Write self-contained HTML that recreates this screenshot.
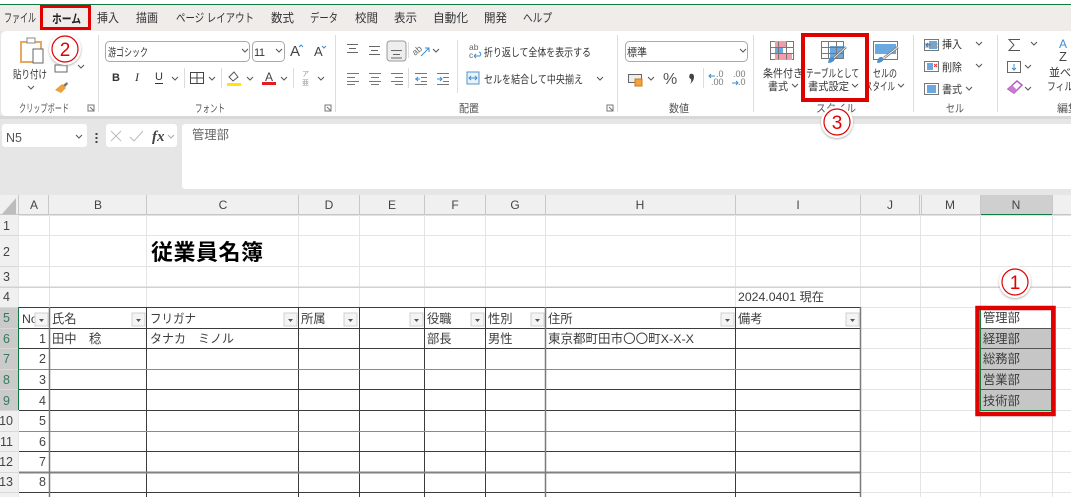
<!DOCTYPE html>
<html lang="ja"><head><meta charset="utf-8"><title>Excel</title>
<style>
html,body{margin:0;padding:0;background:#fff;width:1071px;height:503px;overflow:hidden}
svg{display:block;filter:blur(.3px)}
text{font-family:"Liberation Sans","Noto Sans CJK JP",sans-serif;fill:#444}
.t{font-size:12px;fill:#333}
.r{font-size:11px;fill:#333}
.g{font-size:11px;fill:#555}
.c{font-size:12.300px;fill:#3c3c3c}
.h{font-size:12px;fill:#444;text-anchor:middle}
.n{font-size:12.500px;fill:#444;text-anchor:end}
.s{fill:#35795a}
.ln{stroke:#3c3c3c;stroke-width:1;fill:none}
.lg{stroke:#e4e4e4;stroke-width:1;fill:none}
.ch{fill:none;stroke:#555;stroke-width:1}
.ic{fill:none;stroke:#666;stroke-width:1}
.blue{fill:#6aa9e0}
</style></head><body>
<svg width="1071" height="503" viewBox="0 0 1071 503" xmlns="http://www.w3.org/2000/svg">
<defs>
<path id="cv" d="M0 0l3 3 3-3"/>
<g id="fb"><rect width="13" height="13" fill="#f4f4f4" stroke="#d0d0d0"/><path d="M4 6h5l-2.500 3z" fill="#555"/></g>
<filter id="sh" x="-30%" y="-30%" width="160%" height="160%"><feDropShadow dx="0" dy="1" stdDeviation="1" flood-color="#888" flood-opacity=".7"/></filter>
</defs>

<!-- Top chrome -->
<rect width="1071" height="503" fill="#fff"/>
<rect y="4" width="1071" height="1" fill="#107c41"/>
<rect y="5" width="1071" height="27" fill="#efecea"/>
<rect y="31" width="1071" height="164" fill="#e6e6e6"/>
<rect x="0" y="116" width="1071" height="3" fill="#d8d8d8"/>
<rect x="1" y="31" width="1075" height="85" rx="5" fill="#fff"/>

<!-- Tabs -->
<g class="tabs">
<text class="t" x="4" y="22" textLength="32" lengthAdjust="spacingAndGlyphs">ファイル</text>
<text class="t" x="52" y="23" textLength="29" lengthAdjust="spacingAndGlyphs" font-weight="700" style="fill:#222">ホーム</text>
<text class="t" x="97" y="22" textLength="22" lengthAdjust="spacingAndGlyphs">挿入</text>
<text class="t" x="136" y="22" textLength="22" lengthAdjust="spacingAndGlyphs">描画</text>
<text class="t" x="176" y="22" textLength="78" lengthAdjust="spacingAndGlyphs">ページ レイアウト</text>
<text class="t" x="271" y="22" textLength="23" lengthAdjust="spacingAndGlyphs">数式</text>
<text class="t" x="310" y="22" textLength="28" lengthAdjust="spacingAndGlyphs">データ</text>
<text class="t" x="355" y="22" textLength="23" lengthAdjust="spacingAndGlyphs">校閲</text>
<text class="t" x="394" y="22" textLength="23" lengthAdjust="spacingAndGlyphs">表示</text>
<text class="t" x="433" y="22" textLength="35" lengthAdjust="spacingAndGlyphs">自動化</text>
<text class="t" x="484" y="22" textLength="23" lengthAdjust="spacingAndGlyphs">開発</text>
<text class="t" x="523" y="22" textLength="29" lengthAdjust="spacingAndGlyphs">ヘルプ</text>
</g>

<!-- Ribbon separators -->
<g stroke="#dcdcdc" stroke-width="1">
<path d="M98.500 35V112M335.500 35V112M617.500 35V112M753.500 35V112M913.500 35V112M997.500 35V112"/>
<path d="M457.500 40V93M408.500 42V58M408.500 68V88M184.500 68V88M221.500 68V88M293.500 68V88M703.500 68V88"/>
</g>

<!-- Clipboard -->
<rect x="21" y="42" width="20" height="20" fill="#fff" stroke="#e9a860" stroke-width="2"/>
<rect x="27" y="38" width="8" height="5" fill="#fff" stroke="#888"/>
<rect x="33" y="49" width="10" height="14" fill="#fff" stroke="#666"/>
<text class="r" x="13" y="78" textLength="34" lengthAdjust="spacingAndGlyphs">貼り付け</text>
<use href="#cv" x="28" y="86" class="ch"/>
<rect x="55" y="65" width="12" height="7" class="ic"/>
<use href="#cv" x="78" y="65" class="ch"/>
<path d="M55 90l7-6 4 4-5 5z" fill="#eba13c"/><path d="M63 85l4-3 1 2-3 3z" fill="#777"/>
<text class="g" x="19" y="112" textLength="50" lengthAdjust="spacingAndGlyphs">クリップボード</text>
<path d="M88 105h6v6h-6zM90 107l4 4" fill="none" stroke="#777"/>

<!-- Font -->
<rect x="105.500" y="41.500" width="144" height="20" rx="4" fill="#fff" stroke="#aaa"/>
<text class="r" x="108" y="56" textLength="40" lengthAdjust="spacingAndGlyphs">游ゴシック</text>
<use href="#cv" x="242" y="49" class="ch"/>
<rect x="252.500" y="41.500" width="32" height="20" rx="4" fill="#fff" stroke="#aaa"/>
<text class="r" x="254" y="56" textLength="11">11</text>
<use href="#cv" x="276" y="49" class="ch"/>
<text x="290" y="56" style="font-size:15px;fill:#444">A</text><path d="M299 47l2-2 2 2" fill="none" stroke="#3b8fd6"/>
<text x="314" y="56" style="font-size:13px;fill:#444">A</text><path d="M322 46l2 2 2-2" fill="none" stroke="#3b8fd6"/>
<text x="112" y="81" style="font-size:11px;font-weight:700;fill:#333">B</text>
<text x="135" y="81" style="font-size:12px;font-style:italic;fill:#333;font-family:'Liberation Serif',serif">I</text>
<text x="155" y="80" style="font-size:11px;fill:#333">U</text><path d="M155 83.500h8" stroke="#333"/>
<use href="#cv" x="172" y="77" class="ch"/>
<path d="M190.500 72.500h13v11h-13zM197 72.500v11M190.500 78h13" fill="none" stroke="#444"/>
<use href="#cv" x="209" y="77" class="ch"/>
<path d="M229 77l5-5 4 5-5 4z" fill="none" stroke="#555"/><rect x="227" y="83" width="14" height="3" fill="#ffe800"/>
<use href="#cv" x="247" y="77" class="ch"/>
<text x="265" y="81" style="font-size:12px;fill:#444">A</text><rect x="262" y="82" width="14" height="3" fill="#e51c23"/>
<use href="#cv" x="281" y="77" class="ch"/>
<text x="302" y="76" style="font-size:7px;fill:#999">ア</text><text x="302" y="85" style="font-size:7px;fill:#999">亜</text>
<use href="#cv" x="318" y="77" class="ch"/>
<text class="g" x="195" y="112" textLength="30" lengthAdjust="spacingAndGlyphs">フォント</text>
<path d="M325 105h6v6h-6zM327 107l4 4" fill="none" stroke="#777"/>

<!-- Align -->
<path d="M347 44.500h11M349 48.500h7M347 52.500h11M369 46.500h11M371 50.500h7M369 54.500h11" stroke="#666" fill="none"/>
<rect x="387" y="41" width="19" height="20" rx="3" fill="#eee" stroke="#999"/>
<path d="M391 50.500h11M393 54.500h7M391 58h11" stroke="#666"/>
<text x="415" y="56" style="font-size:9px;fill:#666" transform="rotate(-40 415 56)">ab</text>
<path d="M421 56l8-8m-4 0h4v4" stroke="#3b8fd6" fill="none"/>
<use href="#cv" x="433" y="49" class="ch"/>
<path d="M347 73.500h12M347 77.500h8M347 81.500h12M347 84.500h8M369 73.500h12M371 77.500h8M369 81.500h12M371 84.500h8M391 73.500h12M395 77.500h8M391 81.500h12M395 84.500h8" stroke="#777" fill="none"/>
<path d="M415 73.500h12M421 77.500h6M421 81.500h6M415 84.500h12M437 73.500h12M443 77.500h6M443 81.500h6M437 84.500h12" stroke="#777" fill="none"/>
<path d="M415 79h5M418 77l-2 2 2 2" stroke="#3b8fd6" fill="none"/><path d="M437 79h5M440 77l2 2-2 2" stroke="#3b8fd6" fill="none"/>
<text x="469" y="50" style="font-size:8.500px;fill:#666">ab</text><text x="469" y="58" style="font-size:8.500px;fill:#666">c</text>
<path d="M474 56h6q2-3-1-4M474 56l2-2M474 56l2 2" stroke="#3b8fd6" fill="none"/>
<text class="r" x="484" y="56" textLength="107" lengthAdjust="spacingAndGlyphs">折り返して全体を表示する</text>
<rect x="467" y="72" width="12" height="12" fill="#e8f2fb" stroke="#5a93c4"/><path d="M469 78h8M471 76l-2 2 2 2M475 76l2 2-2 2" stroke="#3b8fd6" fill="none"/>
<text class="r" x="484" y="83" textLength="99" lengthAdjust="spacingAndGlyphs">セルを結合して中央揃え</text>
<use href="#cv" x="597" y="77" class="ch"/>
<text class="g" x="459" y="112" textLength="20" lengthAdjust="spacingAndGlyphs">配置</text>
<path d="M607 105h6v6h-6zM609 107l4 4" fill="none" stroke="#777"/>

<!-- Number -->
<rect x="625.500" y="41.500" width="122" height="20" rx="4" fill="#fff" stroke="#aaa"/>
<text class="r" x="627" y="56" textLength="20" lengthAdjust="spacingAndGlyphs">標準</text>
<use href="#cv" x="740" y="49" class="ch"/>
<rect x="628.500" y="74.500" width="13" height="8" fill="#eee" stroke="#666"/>
<rect x="635" y="79" width="7" height="7" fill="#f6a13c" stroke="#c87a20"/>
<use href="#cv" x="648" y="77" class="ch"/>
<text x="663" y="84" style="font-size:16px;fill:#555">%</text>
<path d="M690 74q4-1 4 3q0 4-4 7q2-3 1-5q-3-1-1-5z" fill="#444"/>
<text x="716" y="77" style="font-size:9px;fill:#777">.0</text><text x="711" y="85" style="font-size:9px;fill:#777">.00</text>
<path d="M709 76h6M711 74l-2 2 2 2" stroke="#3b8fd6" fill="none"/>
<text x="733" y="77" style="font-size:9px;fill:#777">.00</text><text x="738" y="85" style="font-size:9px;fill:#777">.0</text>
<path d="M732 83h6M736 81l2 2-2 2" stroke="#3b8fd6" fill="none"/>
<text class="g" x="669" y="112" textLength="20" lengthAdjust="spacingAndGlyphs">数値</text>

<!-- Styles -->
<rect x="770.500" y="41.500" width="23" height="18" fill="#fff" stroke="#777"/>
<rect x="775" y="41" width="12" height="6" fill="#f59aa6"/><rect x="775" y="47" width="8" height="7" fill="#6aa9e0"/><rect x="775" y="54" width="17" height="6" fill="#f59aa6"/>
<path d="M770.500 47.500h23M770.500 53.500h23M778.500 41.500v18M786.500 41.500v18" stroke="#777" fill="none"/>
<text class="r" x="763" y="77" textLength="40" lengthAdjust="spacingAndGlyphs">条件付き</text>
<text class="r" x="768" y="90" textLength="20" lengthAdjust="spacingAndGlyphs">書式</text>
<use href="#cv" x="792" y="84" class="ch"/>
<rect x="821.500" y="41.500" width="22" height="17" fill="#fff" stroke="#777"/>
<rect x="830" y="46" width="13" height="12" class="blue"/>
<path d="M821.500 47.500h22M821.500 53.500h22M828.500 41.500v17M836.500 41.500v17" stroke="#777" fill="none"/>
<path d="M834 58l12-11" stroke="#777" stroke-width="2.500"/><path d="M834 58l12-11" stroke="#fff" stroke-width=".8"/><path d="M828 63q1-7 5-6l2 2q-2 4-7 4z" fill="#4d8fca"/>
<text class="r" x="806" y="77" textLength="53" lengthAdjust="spacingAndGlyphs">テーブルとして</text>
<text class="r" x="808" y="90" textLength="41" lengthAdjust="spacingAndGlyphs">書式設定</text>
<use href="#cv" x="852" y="84" class="ch"/>
<rect x="873.500" y="41.500" width="24" height="18" fill="#fff" stroke="#777"/>
<rect x="875" y="44" width="21" height="10" class="blue"/>
<path d="M884 58l14-11" stroke="#777" stroke-width="2.500"/><path d="M884 58l14-11" stroke="#fff" stroke-width=".8"/><path d="M877 63q1-7 5-6l2 2q-2 4-7 4z" fill="#4d8fca"/>
<text class="r" x="873" y="77" textLength="24" lengthAdjust="spacingAndGlyphs">セルの</text>
<text class="r" x="865" y="90" textLength="30" lengthAdjust="spacingAndGlyphs">スタイル</text>
<use href="#cv" x="898" y="84" class="ch"/>
<text class="g" x="816" y="112" textLength="40" lengthAdjust="spacingAndGlyphs">スタイル</text>

<!-- Cells -->
<rect x="924.500" y="39.500" width="14" height="11" fill="#fff" stroke="#777"/><rect x="929" y="41" width="8" height="8" class="blue"/><path d="M925 44h13M925 47h13" stroke="#999" fill="none"/><path d="M926 45h5M928 43l-2 2 2 2" stroke="#2a7cc8" fill="none"/>
<text class="r" x="942" y="48" textLength="20" lengthAdjust="spacingAndGlyphs">挿入</text><use href="#cv" x="976" y="42" class="ch"/>
<rect x="924.500" y="61.500" width="14" height="10" fill="#fff" stroke="#777"/><rect x="927" y="63" width="6" height="7" class="blue"/><path d="M934 64l3 3m0-3l-3 3" stroke="#e33"/>
<text class="r" x="942" y="71" textLength="20" lengthAdjust="spacingAndGlyphs">削除</text><use href="#cv" x="976" y="64" class="ch"/>
<rect x="924.500" y="83.500" width="14" height="11" fill="#fff" stroke="#777"/><rect x="927" y="85" width="9" height="8" class="blue"/>
<text class="r" x="942" y="93" textLength="20" lengthAdjust="spacingAndGlyphs">書式</text><use href="#cv" x="966" y="87" class="ch"/>
<text class="g" x="946" y="112" textLength="18" lengthAdjust="spacingAndGlyphs">セル</text>

<!-- Edit -->
<path d="M1020 39.500h-11l5 5.500-5 5.500h11" fill="none" stroke="#555"/><use href="#cv" x="1031" y="42" class="ch"/>
<rect x="1007.500" y="61.500" width="13" height="11" fill="#fff" stroke="#666"/><path d="M1014 64v6m-2-2l2 2 2-2" stroke="#3b8fd6" fill="none"/>
<use href="#cv" x="1025" y="65" class="ch"/>
<path d="M1008 89l9-8 5 4-8 8z" fill="#fff" stroke="#b45cc0" stroke-width="1.500"/><path d="M1008 89l4-4 5 5-3 3z" fill="#c77dcf"/>
<use href="#cv" x="1025" y="87" class="ch"/>
<text x="1059" y="48" style="font-size:12px;fill:#3b8fd6">A</text>
<text x="1059" y="61" style="font-size:13px;fill:#444">Z</text>
<text class="r" x="1049" y="76" textLength="33" lengthAdjust="spacingAndGlyphs">並べ替</text>
<text class="r" x="1047" y="90" textLength="35" lengthAdjust="spacingAndGlyphs">フィルタ</text>
<text class="g" x="1057" y="112" textLength="22" lengthAdjust="spacingAndGlyphs">編集</text>

<!-- Formula bar -->
<rect x="2" y="124" width="85" height="23" rx="3" fill="#fff"/>
<text x="6" y="142" style="font-size:12.500px;fill:#555">N5</text>
<use href="#cv" x="76" y="135" class="ch"/>
<path d="M96.500 133v2M96.500 137v2M96.500 141v2" stroke="#444" stroke-width="2"/>
<rect x="106" y="124" width="71" height="23" rx="3" fill="#fff"/>
<path d="M111 131l10 10m0-10l-10 10M130 137l4 4 9-10" stroke="#bbb" fill="none"/>
<text x="152" y="141" style="font-size:15px;font-style:italic;font-weight:700;fill:#444;font-family:'Liberation Serif',serif">fx</text>
<use href="#cv" x="168" y="135" class="ch" style="stroke:#aaa"/>
<rect x="182" y="124" width="895" height="65" rx="3" fill="#fff"/>
<text x="192" y="139" style="font-size:12.300px;fill:#666">管理部</text>

<!-- Sheet -->
<rect y="195" width="1071" height="308" fill="#fff"/>
<rect y="195" width="1071" height="20" fill="#f0f0f0"/>
<rect x="980" y="195" width="72" height="20" fill="#cfcfcf"/>
<rect x="0" y="214" width="1071" height="1.500" fill="#c6c6c6"/>
<rect x="980" y="214" width="72" height="1" fill="#107c41"/>
<rect x="0" y="215" width="18" height="282" fill="#f0f0f0"/>
<rect x="0" y="307" width="18" height="103" fill="#cacaca"/>
<path d="M2 214L16 198V214z" fill="#bdbdbd"/>

<!-- Grid lines -->
<g class="lg">
<path d="M18.500 215V497M49.500 215V497M146.500 215V497M298.500 215V497M359.500 215V497M424.500 215V497M485.500 215V497M545.500 215V497M735.500 215V497M860.500 215V497M920.500 215V497M980.500 215V497M1052.500 215V497"/>
<path d="M0 235.500H1071M0 266.500H1071M0 307.500H1071M0 328.500H1071M0 348.500H1071M0 369.500H1071M0 389.500H1071M0 410.500H1071M0 431.500H1071M0 451.500H1071M0 472.500H1071M0 492.500H1071"/>
</g>
<rect x="0" y="286.500" width="1071" height="1.500" fill="#d2d2d2"/>
<path d="M48.500 195V215M146.500 195V215M298.500 195V215M359.500 195V215M424.500 195V215M485.500 195V215M545.500 195V215M735.500 195V215M860.500 195V215M919.500 195V215M921.500 195V215M980.500 195V215M1052.500 195V215M18.500 195V215" stroke="#c8c8c8" fill="none"/>
<path d="M0 235.500H18M0 266.500H18M0 307.500H18M0 328.500H18M0 348.500H18M0 369.500H18M0 389.500H18M0 410.500H18M0 431.500H18M0 451.500H18M0 472.500H18M0 492.500H18" stroke="#d8d8d8"/>
<rect x="18" y="307" width="1" height="103" fill="#107c41"/>

<!-- Column headings -->
<text class="h" x="34" y="209">A</text><text class="h" x="98" y="209">B</text><text class="h" x="223" y="209">C</text><text class="h" x="329" y="209">D</text><text class="h" x="392" y="209">E</text><text class="h" x="455" y="209">F</text><text class="h" x="515" y="209">G</text><text class="h" x="640" y="209">H</text><text class="h" x="798" y="209">I</text><text class="h" x="890" y="209">J</text><text class="h" x="950" y="209">M</text><text class="h" x="1016" y="209">N</text>

<!-- Row headings -->
<g>
<text class="n" x="10" y="230">1</text><text class="n" x="10" y="256">2</text><text class="n" x="10" y="281">3</text><text class="n" x="10" y="301">4</text><text class="n s" x="10" y="322">5</text><text class="n s" x="10" y="343">6</text><text class="n s" x="10" y="363">7</text><text class="n s" x="10" y="384">8</text><text class="n s" x="10" y="405">9</text><text class="n" x="13" y="425">10</text><text class="n" x="13" y="446">11</text><text class="n" x="13" y="466">12</text><text class="n" x="13" y="486">13</text>
</g>

<text x="151" y="260" style="font-size:22px;font-weight:700;fill:#000" textLength="112">従業員名簿</text>
<text class="c" x="738" y="301" style="font-size:12px" textLength="86" lengthAdjust="spacingAndGlyphs">2024.0401 現在</text>

<!-- Table -->
<g class="ln">
<path d="M19 307.500H860M19 328.500H860M19 348.500H860M19 389.500H860M19 410.500H860M19 451.500H860M19 492.500H860"/>
<path d="M146.500 307V497M298.500 307V497M359.500 307V497M424.500 307V497M485.500 307V497M735.500 307V497"/>
</g>
<path d="M19 369.500H860M19 431.500H860" stroke="#8a8a8a"/>
<rect x="19" y="471.500" width="841" height="2" fill="#808080"/>
<path d="M49.500 307V497M545.500 307V497M860.500 307V497" stroke="#7a7a7a" stroke-width="1.500"/>

<text class="c" x="22" y="323">No</text>
<use href="#fb" x="35" y="313"/>
<text class="c" x="52" y="323">氏名</text><use href="#fb" x="132" y="313"/>
<text class="c" x="150" y="323" textLength="46" lengthAdjust="spacingAndGlyphs">フリガナ</text><use href="#fb" x="284" y="313"/>
<text class="c" x="301" y="323">所属</text><use href="#fb" x="344" y="313"/>
<use href="#fb" x="410" y="313"/>
<text class="c" x="427" y="323">役職</text><use href="#fb" x="471" y="313"/>
<text class="c" x="488" y="323">性別</text><use href="#fb" x="531" y="313"/>
<text class="c" x="548" y="323">住所</text><use href="#fb" x="721" y="313"/>
<text class="c" x="738" y="323">備考</text><use href="#fb" x="846" y="313"/>

<text class="c" x="52" y="343">田中</text><text class="c" x="89" y="343">稔</text>
<text class="c" x="150" y="343" textLength="84" lengthAdjust="spacingAndGlyphs">タナカ　ミノル</text>
<text class="c" x="427" y="343">部長</text><text class="c" x="488" y="343">男性</text>
<text class="c" x="548" y="343" textLength="146" lengthAdjust="spacingAndGlyphs">東京都町田市〇〇町X-X-X</text>
<text class="n" x="46" y="343">1</text><text class="n" x="46" y="363">2</text><text class="n" x="46" y="384">3</text><text class="n" x="46" y="405">4</text><text class="n" x="46" y="425">5</text><text class="n" x="46" y="446">6</text><text class="n" x="46" y="466">7</text><text class="n" x="46" y="486">8</text>

<!-- N range -->
<rect x="981" y="328" width="70" height="82" fill="#c6c6c6"/>
<path d="M981 328.500H1051M981 348.500H1051M981 369.500H1051M981 389.500H1051" stroke="#555"/>
<text class="c" x="983" y="322">管理部</text>
<text class="c" x="983" y="343">経理部</text>
<text class="c" x="983" y="363">総務部</text>
<text class="c" x="983" y="384">営業部</text>
<text class="c" x="983" y="405">技術部</text>
<rect x="980.500" y="307.500" width="71" height="103" fill="none" stroke="#107c41"/>
<rect x="977.500" y="308" width="76" height="106" fill="none" stroke="#e00000" stroke-width="4.500"/>

<!-- Red boxes -->
<rect x="41.500" y="6.500" width="48" height="22" fill="none" stroke="#e00000" stroke-width="3"/>
<rect x="803" y="35" width="64" height="65" fill="none" stroke="#e00000" stroke-width="4"/>

<!-- Badges -->
<g filter="url(#sh)"><circle cx="65" cy="49" r="16" fill="#fff"/></g>
<circle cx="65" cy="49" r="13" fill="#fff" stroke="#e00000" stroke-width="1.200"/>
<text x="65" y="56" style="font-size:19px;fill:#e00000;text-anchor:middle">2</text>
<g filter="url(#sh)"><circle cx="837" cy="122" r="16" fill="#fff"/></g>
<circle cx="837" cy="122" r="13" fill="#fff" stroke="#e00000" stroke-width="1.200"/>
<text x="837" y="129" style="font-size:19px;fill:#e00000;text-anchor:middle">3</text>
<g filter="url(#sh)"><circle cx="1015" cy="282" r="16" fill="#fff"/></g>
<circle cx="1015" cy="282" r="13" fill="#fff" stroke="#e00000" stroke-width="1.200"/>
<text x="1015" y="289" style="font-size:19px;fill:#e00000;text-anchor:middle">1</text>
</svg>
</body></html>
